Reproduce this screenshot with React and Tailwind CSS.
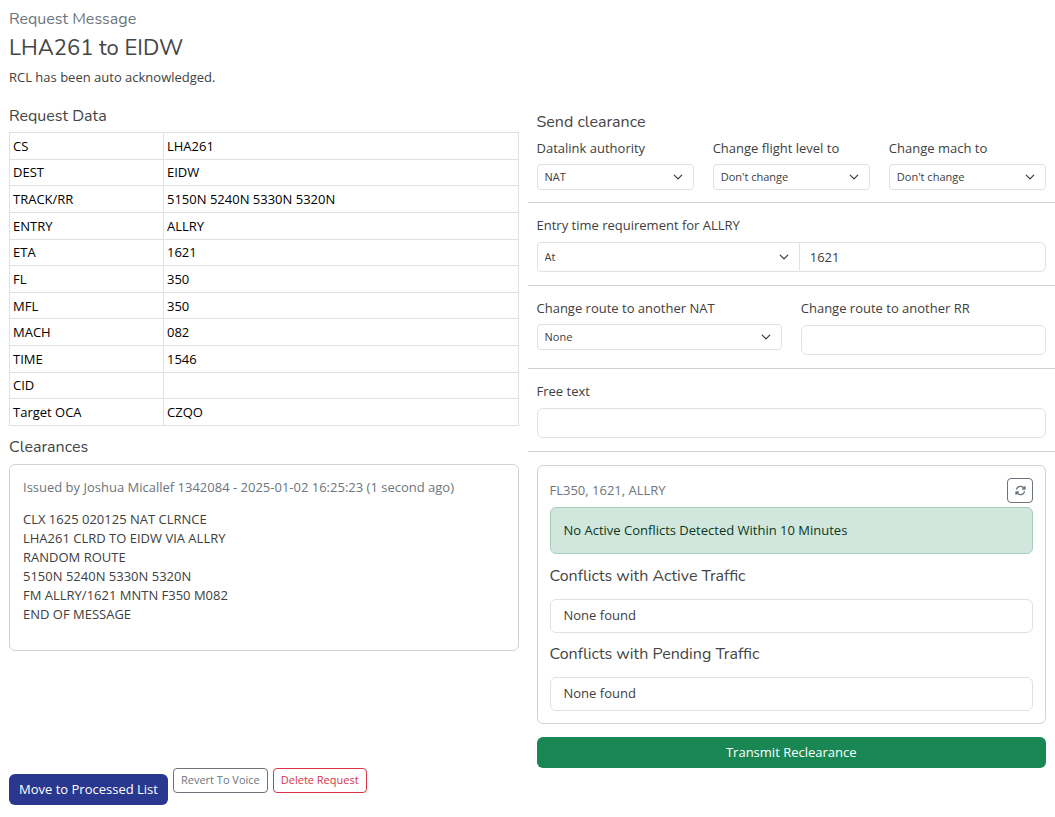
import { useId } from "react";
import { FaRotate } from "react-icons/fa6";

const requestData = [
  ["CS", "LHA261"],
  ["DEST", "EIDW"],
  ["TRACK/RR", "5150N 5240N 5330N 5320N"],
  ["ENTRY", "ALLRY"],
  ["ETA", "1621"],
  ["FL", "350"],
  ["MFL", "350"],
  ["MACH", "082"],
  ["TIME", "1546"],
  ["CID", ""],
  ["Target OCA", "CZQO"],
];

const clearanceLines = [
  "CLX 1625 020125 NAT CLRNCE",
  "LHA261 CLRD TO EIDW VIA ALLRY",
  "RANDOM ROUTE",
  "5150N 5240N 5330N 5320N",
  "FM ALLRY/1621 MNTN F350 M082",
  "END OF MESSAGE",
];

function Heading({ children }) {
  return (
    <h2 className="font-['Nunito','Lato',sans-serif] text-base leading-5 text-[#454545]">
      {children}
    </h2>
  );
}

function Select({ id, options, className = "h-[26px] rounded", ...rest }) {
  return (
    <div className="relative">
      <select
        id={id}
        className={`block w-full appearance-none border border-[#dee2e6] bg-white pr-7 pl-[7px] text-[11px] text-[#404040] ${className}`}
        {...rest}
      >
        {options.map((option) => (
          <option key={option}>{option}</option>
        ))}
      </select>
      <svg
        viewBox="0 0 16 16"
        className="pointer-events-none absolute inset-y-0 right-[11px] my-auto size-[10px]"
        fill="none"
        stroke="#343a40"
        strokeWidth="2"
        strokeLinecap="round"
        strokeLinejoin="round"
        aria-hidden="true"
      >
        <path d="m2 5 6 6 6-6" />
      </svg>
    </div>
  );
}

function SelectField({ label, options }) {
  const id = useId();
  return (
    <div className="flex flex-col gap-[6px]">
      <label htmlFor={id}>{label}</label>
      <Select id={id} options={options} />
    </div>
  );
}

function TextField({ label }) {
  const id = useId();
  return (
    <div className="flex flex-col gap-[7px]">
      <label htmlFor={id}>{label}</label>
      <input
        id={id}
        type="text"
        className="h-[30px] w-full rounded-md border border-[#dee2e6] px-[10px]"
      />
    </div>
  );
}

function ConflictList({ title }) {
  return (
    <section className="flex flex-col gap-[13px]">
      <Heading>{title}</Heading>
      <ul className="rounded-md border border-[#dee2e6] px-[13px] pt-[5px] pb-[7px]">
        <li>None found</li>
      </ul>
    </section>
  );
}

export default function App() {
  const entryId = useId();
  return (
    <main className="min-h-screen bg-white pb-3 font-['Open_Sans',sans-serif] text-[13px] leading-5 text-[#404040]">
      <header className="px-[9px] pt-[9px]">
        <p className="font-['Nunito','Lato',sans-serif] text-base leading-5 text-[#6c757d]">
          Request Message
        </p>
        <h1 className="mt-1 font-['Nunito','Lato',sans-serif] text-[22px] leading-[30px] text-[#454545]">
          LHA261 to EIDW
        </h1>
        <p className="mt-1">RCL has been auto acknowledged.</p>
      </header>

      <div className="mt-[19px] grid grid-cols-2">
        <div className="px-[9px]">
          <Heading>Request Data</Heading>
          <table className="mt-[6px] h-[294px] w-full border-collapse text-black">
            <tbody>
              {requestData.map(([name, value]) => (
                <tr key={name}>
                  <th
                    scope="row"
                    className="w-[154px] border border-[#dee2e6] px-[3px] text-left font-normal"
                  >
                    {name}
                  </th>
                  <td className="border border-[#dee2e6] px-[3px]">{value}</td>
                </tr>
              ))}
            </tbody>
          </table>

          <div className="mt-[11px] flex flex-col gap-[7px]">
            <Heading>Clearances</Heading>
            <article className="rounded-md border border-[#d2d2d2] px-[13px] pt-3 pb-[26px]">
              <p className="text-[#6c757d]">
                Issued by Joshua Micallef 1342084 - 2025-01-02 16:25:23 (1 second ago)
              </p>
              <div className="mt-[13px] leading-[19px]">
                {clearanceLines.map((line) => (
                  <p key={line}>{line}</p>
                ))}
              </div>
            </article>
          </div>
        </div>

        <form className="pt-[6px]" onSubmit={(event) => event.preventDefault()}>
          <div className="border-b border-[#cfcfcf] px-[9px] pb-3">
            <Heading>Send clearance</Heading>
            <div className="mt-[6px] grid grid-cols-3 gap-[19px]">
              <SelectField label="Datalink authority" options={["NAT"]} />
              <SelectField label="Change flight level to" options={["Don't change"]} />
              <SelectField label="Change mach to" options={["Don't change"]} />
            </div>
          </div>

          <div className="border-b border-[#cfcfcf] px-[9px] pt-3 pb-[13px]">
            <label htmlFor={entryId}>Entry time requirement for ALLRY</label>
            <div className="mt-[7px] grid grid-cols-[263fr_246fr]">
              <Select id={entryId} options={["At"]} className="h-[30px] rounded-l" />
              <input
                type="text"
                aria-label="Entry time"
                defaultValue="1621"
                className="h-[30px] w-full rounded-r-md border border-l-0 border-[#dee2e6] px-[10px]"
              />
            </div>
          </div>

          <div className="grid grid-cols-2 gap-[19px] border-b border-[#cfcfcf] px-[9px] pt-3 pb-[13px]">
            <SelectField label="Change route to another NAT" options={["None"]} />
            <TextField label="Change route to another RR" />
          </div>

          <div className="border-b border-[#cfcfcf] px-[9px] pt-3 pb-[13px]">
            <TextField label="Free text" />
          </div>

          <div className="flex flex-col gap-[13px] px-[9px] pt-[13px]">
            <div className="rounded-md border border-[#d2d2d2] p-3">
              <div className="flex items-start justify-between">
                <p className="leading-6 text-[#6c757d]">FL350, 1621, ALLRY</p>
                <button
                  type="button"
                  aria-label="Refresh conflicts"
                  className="flex h-[25px] w-[26px] items-center justify-center rounded border border-[#6c757d] text-[11px] text-[#6c757d]"
                >
                  <FaRotate />
                </button>
              </div>
              <div
                role="status"
                className="mt-1 rounded-md border border-[#a3cfbb] bg-[#d1e7dd] px-[13px] pt-3 pb-[13px] text-[#0a3622]"
              >
                No Active Conflicts Detected Within 10 Minutes
              </div>
              <div className="mt-3 flex flex-col gap-[11px]">
                <ConflictList title="Conflicts with Active Traffic" />
                <ConflictList title="Conflicts with Pending Traffic" />
              </div>
            </div>
            <button type="submit" className="h-[31px] w-full rounded-md bg-[#198754] pb-[2px] text-white">
              Transmit Reclearance
            </button>
          </div>
        </form>
      </div>

      <div className="flex items-start gap-[5px] px-[9px]">
        <button type="button" className="mt-[6px] h-[31px] rounded-md bg-[#2a378e] px-[10px] pb-[2px] text-white">
          Move to Processed List
        </button>
        <button
          type="button"
          className="h-[25px] rounded border border-[#6c757d] px-[7px] pb-[2px] text-[11px] text-[#6c757d]"
        >
          Revert To Voice
        </button>
        <button
          type="button"
          className="h-[25px] rounded border border-[#dc3545] px-[7px] pb-[2px] text-[11px] text-[#dc3545]"
        >
          Delete Request
        </button>
      </div>
    </main>
  );
}
